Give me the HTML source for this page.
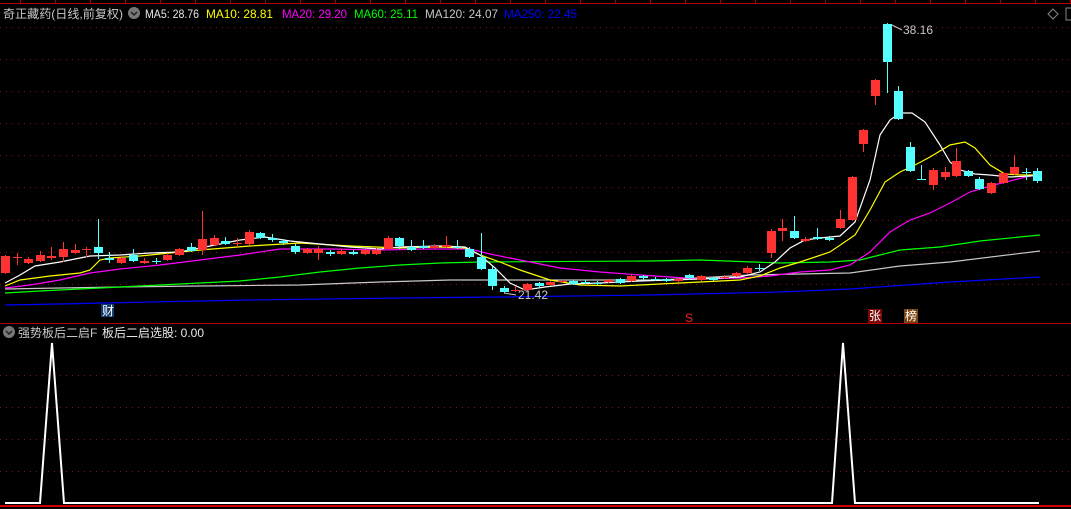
<!DOCTYPE html>
<html><head><meta charset="utf-8"><style>
html,body{margin:0;padding:0;background:#000;width:1071px;height:509px;overflow:hidden}
svg{display:block}
text{font-family:"Liberation Sans","Noto Sans CJK SC",sans-serif;font-size:12px}
</style></head><body>
<svg id="s" width="1071" height="509" xmlns="http://www.w3.org/2000/svg">
<rect width="1071" height="509" fill="#000"/>
<g id="grid"></g>
<line x1="0" y1="3.5" x2="1071" y2="3.5" stroke="#b00000"/>
<g id="ticks"></g>
<line x1="0" y1="323.5" x2="1071" y2="323.5" stroke="#b00000"/>
<line x1="0" y1="506" x2="1071" y2="506" stroke="#d00000" stroke-width="2"/>
<g id="ma"></g>
<g id="c"></g>
<text x="3" y="18" fill="#c8c8c8" font-size="13" textLength="120" lengthAdjust="spacingAndGlyphs">奇正藏药(日线,前复权)</text>
<circle cx="134" cy="13" r="6" fill="#777"/><path d="M131 12l3 3 3-3" stroke="#222" stroke-width="1.5" fill="none"/>
<text x="145" y="18" fill="#e8e8e8" textLength="54" lengthAdjust="spacingAndGlyphs">MA5: 28.76</text>
<text x="206" y="18" fill="#ffff00" textLength="67" lengthAdjust="spacingAndGlyphs">MA10: 28.81</text>
<text x="282" y="18" fill="#ff00ff" textLength="65" lengthAdjust="spacingAndGlyphs">MA20: 29.20</text>
<text x="354" y="18" fill="#00ff00" textLength="64" lengthAdjust="spacingAndGlyphs">MA60: 25.11</text>
<text x="425" y="18" fill="#c8c8c8" textLength="73" lengthAdjust="spacingAndGlyphs">MA120: 24.07</text>
<text x="504" y="18" fill="#0000ff" textLength="73" lengthAdjust="spacingAndGlyphs">MA250: 22.45</text>
<path d="M1053 9l5 5-5 5-5-5z" stroke="#888" fill="none"/>
<rect x="1066" y="8" width="8" height="12" stroke="#888" fill="none"/>
<text x="903" y="34" fill="#c8c8c8">38.16</text>
<path d="M892 25l10 5" stroke="#c8c8c8"/>
<text x="518" y="299" fill="#c8c8c8">21.42</text>
<path d="M504 293l12 2" stroke="#c8c8c8"/>
<rect x="101" y="304" width="13" height="13" fill="#123c70"/><text x="102" y="315" fill="#fff">财</text>
<rect x="868" y="309" width="14" height="14" fill="#7a0808"/><text x="869" y="320" fill="#fff">张</text>
<rect x="904" y="309" width="14" height="14" fill="#7a4510"/><text x="905" y="320" fill="#fff">榜</text>
<text x="685" y="322" fill="#ff2020" font-size="10">S</text>
<circle cx="9" cy="332" r="6" fill="#777"/><path d="M6 331l3 3 3-3" stroke="#222" stroke-width="1.5" fill="none"/>
<text x="18" y="337" fill="#c8c8c8">强势板后二启F</text>
<text x="102" y="337" fill="#e8e8e8">板后二启选股: 0.00</text>
<polyline points="5,503 40,503 52,343 64,503 832,503 843,343 855,503 1039,503" fill="none" stroke="#fff" stroke-width="2"/>
</svg>
<script>
var NS="http://www.w3.org/2000/svg";
function el(p,t,a){var e=document.createElementNS(NS,t);for(var k in a)e.setAttribute(k,a[k]);document.getElementById(p).appendChild(e);}
[27,59,91,123,155,187,220,252,284,375,407,439,471].forEach(function(y){el("grid","line",{x1:0,x2:1071,y1:y+.5,y2:y+.5,stroke:"#8a1010","stroke-dasharray":"1 5"});});
for(var x=20;x<1071;x+=35)el("ticks","line",{x1:x+.5,x2:x+.5,y1:0,y2:3,stroke:"#b00000"});
var ma=[["#0000ff","5,305 60,304 150,302 250,300 400,298 500,297 650,295 780,292 850,289 950,282 1040,277"],
["#c8c8c8","5,289 60,288 120,287 200,286 300,285 380,282 450,280 660,280 750,275 850,273 900,266 950,262 1040,251"],
["#00ff00","5,293 40,291 80,289 120,287 160,285 200,283 240,281 280,277 320,272 360,268 400,265 440,263 480,262 650,261 700,260 780,263 830,262 860,260 880,255 900,250 940,247 980,241 1040,235"],
["#ff00ff","5,288 30,285 60,280 90,273 120,269 160,265 200,260 240,255 280,249 330,249 380,250 430,249 470,249 490,254 520,260 560,268 600,272 640,275 700,279 740,278 770,276 800,272 830,270 850,265 870,252 890,232 910,220 930,213 950,203 970,192 990,186 1010,181 1030,176 1040,175"],
["#ffff00","5,286 20,280 50,276 80,273 90,270 100,260 110,258 140,256 160,254 200,250 250,246 300,243 350,246 400,248 440,247 465,248 480,255 500,262 520,270 550,280 580,285 620,286 680,283 740,280 760,276 780,268 800,262 830,252 855,235 870,210 885,182 900,172 915,165 930,157 950,145 965,142 975,148 990,165 1005,174 1020,175 1040,175"],
["#ffffff","5,283 20,275 35,266 60,262 90,256 120,255 150,253 180,252 200,248 215,245 240,240 265,237 290,241 320,244 350,247 380,249 400,247 440,246 465,247 480,255 495,268 510,283 525,290 545,287 570,284 600,283 640,281 700,279 740,277 760,272 775,262 790,248 805,240 820,238 840,236 855,222 870,180 880,135 890,120 900,113 912,113 925,122 940,145 950,162 960,170 975,174 990,175 1010,177 1030,176 1040,175"]];
ma.forEach(function(m){el("ma","polyline",{points:m[1],fill:"none",stroke:m[0],"stroke-width":1.2});});
var C=[[1,256,273,255,274],[1,257,258,253,265],[1,259,263,257,264],[1,255,261,251,262],[1,256,258,247,260],[1,249,257,242,262],[1,250,253,244,254],[1,249,250,247,257],[0,247,253,219,259],[0,258,260,252,263],
[1,258,263,256,264],[0,255,261,249,262],[1,261,263,258,264],[0,261,262,258,264],[1,255,260,253,261],[1,249,255,248,256],[0,247,251,243,252],[1,239,250,211,255],[1,238,245,235,246],[0,241,244,237,245],
[1,243,244,238,247],[1,232,244,230,245],[0,233,238,232,239],[0,238,240,234,242],[0,241,243,239,245],[0,246,252,244,254],[1,249,253,248,254],[1,249,253,246,260],[0,252,254,250,256],[1,251,254,249,255],
[0,252,254,250,255],[1,250,254,249,255],[1,250,254,248,255],[1,238,249,236,250],[0,238,246,237,249],[0,247,250,240,251],[0,246,248,240,249],[1,246,248,244,249],[1,245,247,236,248],[0,247,248,240,249],
[0,249,257,247,258],[0,257,269,233,270],[0,269,286,266,290],[0,288,292,286,293],[1,290,291,286,292],[1,284,290,283,291],[0,283,286,282,288],[1,282,285,281,286],[1,281,282,280,283],[0,281,284,280,285],
[0,282,283,280,284],[0,283,284,281,285],[1,280,282,279,283],[0,279,283,278,284],[1,276,281,275,282],[0,276,278,275,280],[0,279,280,277,281],[0,279,281,278,282],[1,279,281,278,282],[0,275,278,274,280],
[1,276,280,275,281],[0,278,280,277,281],[1,277,278,275,279],[1,273,276,272,277],[1,268,273,266,274],[0,268,269,264,271],[1,231,253,229,258],[1,228,231,219,241],[0,231,238,216,239],[1,239,241,237,242],
[0,237,239,228,240],[0,238,240,236,241],[1,219,228,210,229],[1,177,220,176,221],[1,130,144,129,152],[1,80,96,79,105],[0,24,62,23,93],[0,91,119,86,120],[0,147,171,142,172],[0,179,180,165,180],
[1,170,185,168,190],[1,172,177,167,180],[1,161,176,148,177],[0,171,176,170,177],[0,179,189,177,190],[1,183,193,182,194],[1,173,183,172,184],[1,167,174,155,175],[0,172,173,168,180],[0,171,181,168,183]];
C.forEach(function(c,i){var x=Math.round(5+11.6*i),col=c[0]?"#ff3232":"#54ffff";
el("c","line",{x1:x+.5,x2:x+.5,y1:c[3],y2:c[4],stroke:col});
var h=Math.max(1,c[2]-c[1]);el("c","rect",{x:x-4,y:c[1],width:9,height:h,fill:col});});
</script>
</body></html>
